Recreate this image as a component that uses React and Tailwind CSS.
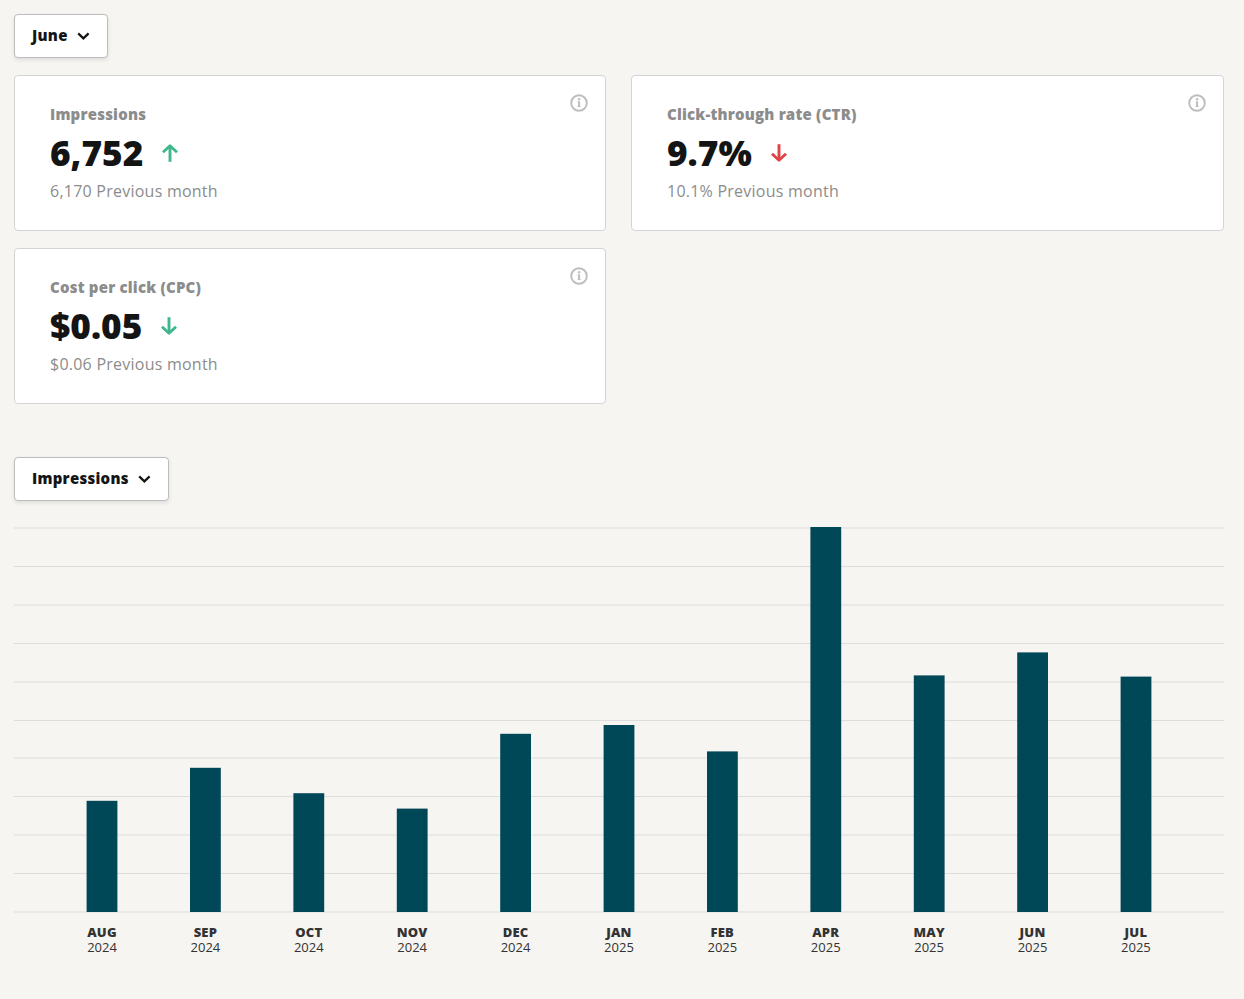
const stats = [
  { label: 'Impressions', value: '6,752', previous: '6,170', direction: 'up', good: true },
  { label: 'Click-through rate (CTR)', value: '9.7%', previous: '10.1%', direction: 'down', good: false },
  { label: 'Cost per click (CPC)', value: '$0.05', previous: '$0.06', direction: 'down', good: true },
];

const bars = [
  { month: 'AUG', year: 2024, height: 111.2 },
  { month: 'SEP', year: 2024, height: 144.2 },
  { month: 'OCT', year: 2024, height: 118.8 },
  { month: 'NOV', year: 2024, height: 103.4 },
  { month: 'DEC', year: 2024, height: 178.2 },
  { month: 'JAN', year: 2025, height: 187 },
  { month: 'FEB', year: 2025, height: 160.6 },
  { month: 'APR', year: 2025, height: 385 },
  { month: 'MAY', year: 2025, height: 236.6 },
  { month: 'JUN', year: 2025, height: 259.6 },
  { month: 'JUL', year: 2025, height: 235.4 },
];

const gridLines = [3, 41.5, 80, 118.5, 157, 195.5, 233, 271.5, 310, 348.5, 387];

const BASELINE = 387;
const BAND = 103.4;

function Dropdown({ label, className }) {
  return (
    <button
      className={`flex h-11 items-center rounded border border-[#bdbdc0] bg-white pl-[17px] font-extrabold text-[#141414] shadow-[0_2px_4px_rgba(0,0,0,0.1)] ${className}`}
    >
      <span className="pb-0.5 text-[15px] tracking-[0.25px]">{label}</span>
      <svg className="ml-2" width="14" height="10" viewBox="0 0 14 10" fill="none" stroke="currentColor" strokeWidth="2.2">
        <path d="M2.2 2.4 L7.4 7.4 L12.6 2.4" />
      </svg>
    </button>
  );
}

function TrendArrow({ direction, good }) {
  return (
    <svg
      className={`${good ? 'text-[#3fb68b]' : 'text-[#e04347]'} ${direction === 'down' ? 'rotate-180' : ''}`}
      width="18"
      height="20"
      viewBox="0 0 18 20"
      fill="none"
      stroke="currentColor"
      strokeWidth="2.9"
    >
      <path d="M9 18.8 V3" />
      <path d="M2 9.3 L9 2.8 L16 9.3" strokeLinejoin="round" />
    </svg>
  );
}

function InfoIcon() {
  return (
    <svg className="absolute right-[17.5px] top-[18px]" width="18" height="18" viewBox="0 0 18 18" fill="none" stroke="#bdbdbd">
      <circle cx="9" cy="9" r="7.8" strokeWidth="1.9" />
      <path d="M9.1 7.4 V13" strokeWidth="2" />
      <path d="M7.5 7.9 H9 M7.5 12.6 H10.7" strokeWidth="0.8" />
      <circle cx="9.1" cy="5.3" r="1.2" fill="#bdbdbd" stroke="none" />
    </svg>
  );
}

function StatCard({ stat }) {
  return (
    <div className="relative h-[156px] rounded border border-[#d4d4d6] bg-white pl-[35px] pt-[26px]">
      <InfoIcon />
      <p className="text-[15px] font-extrabold leading-6 tracking-[0.2px] text-[#8c8c8c]">{stat.label}</p>
      <div className="flex h-[53px] items-center gap-[18px] pt-px">
        <span className="pb-0.5 text-[35.2px] font-extrabold leading-[50px] text-[#141414]">{stat.value}</span>
        <TrendArrow direction={stat.direction} good={stat.good} />
      </div>
      <p className="text-base leading-6 tracking-[0.24px] text-[#8c8c8c]">{stat.previous} Previous month</p>
    </div>
  );
}

function BarChart() {
  return (
    <div className="w-[1210px]">
      <svg className="block" width="1210" height="400" viewBox="0 0 1210 400">
        {gridLines.map((y) => (
          <line key={y} x1="0" x2="1210" y1={y} y2={y} stroke="#dddddd" strokeWidth="1" />
        ))}
        {bars.map((bar, i) => (
          <rect key={bar.month} x={72.6 + BAND * i} y={BASELINE - bar.height} width="30.8" height={bar.height} fill="#004757" />
        ))}
      </svg>
      <div className="flex pl-[36.3px] text-center text-[13px] leading-[15px] text-[#333]">
        {bars.map((bar) => (
          <div key={bar.month} className="w-[103.4px] shrink-0">
            <div className="font-extrabold tracking-[0.2px]">{bar.month}</div>
            <div>{bar.year}</div>
          </div>
        ))}
      </div>
    </div>
  );
}

export default function App() {
  return (
    <div className="min-h-screen bg-[#f6f5f1] pl-3.5 pr-5 pt-3.5 font-['Open_Sans',sans-serif]">
      <Dropdown label="June" className="w-[94px]" />
      <div className="mt-[17px] grid grid-cols-[592px_593px] gap-x-[25px] gap-y-[17px]">
        {stats.map((stat) => (
          <StatCard key={stat.label} stat={stat} />
        ))}
      </div>
      <Dropdown label="Impressions" className="mt-[53px] mb-6 w-[155px]" />
      <BarChart />
    </div>
  );
}
